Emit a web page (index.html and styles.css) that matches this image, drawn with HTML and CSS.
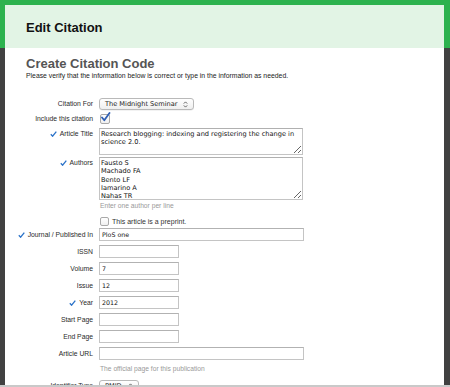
FILE: index.html
```html
<!DOCTYPE html>
<html>
<head>
<meta charset="utf-8">
<link rel="stylesheet" href="styles.css">
</head>
<body>
<div class="viewport">
  <div class="panel">
    <div class="panel-head"><h1>Edit Citation</h1></div>
    <div class="panel-body">
      <h2>Create Citation Code</h2>
      <p class="intro">Please verify that the information below is correct or type in the information as needed.</p>

      <div class="row r-select">
        <label class="lbl">Citation For</label>
        <div class="select w-cite"><span>The Midnight Seminar</span><svg class="arr" width="5" height="7" viewBox="0 0 5 7"><path d="M0.8 2.6 L2.5 0.9 L4.2 2.6 M0.8 4.4 L2.5 6.1 L4.2 4.4" fill="none" stroke="#555" stroke-width="0.9"/></svg></div>
      </div>

      <div class="row r-check">
        <label class="lbl">Include this citation</label>
        <div class="cb checked"><svg width="11" height="11" viewBox="0 0 11 11"><path d="M2 5.5 L4.3 8.3 L9.5 1" fill="none" stroke="#2f5fb3" stroke-width="1.8" stroke-linecap="round" stroke-linejoin="round"/></svg></div>
      </div>

      <div class="row r-title">
        <label class="lbl"><svg class="ok" width="7" height="6" viewBox="0 0 7 6"><path d="M0.8 3.3 L2.6 5.2 L6.3 0.6" fill="none" stroke="#2a72c8" stroke-width="1.3"/></svg>Article Title</label>
        <textarea class="ta ta-title">Research blogging: indexing and registering the change in science 2.0.</textarea>
      </div>

      <div class="row r-authors">
        <label class="lbl"><svg class="ok" width="7" height="6" viewBox="0 0 7 6"><path d="M0.8 3.3 L2.6 5.2 L6.3 0.6" fill="none" stroke="#2a72c8" stroke-width="1.3"/></svg>Authors</label>
        <textarea class="ta ta-authors">Fausto S
Machado FA
Bento LF
Iamarino A
Nahas TR</textarea>
      </div>

      <div class="row r-hint">
        <span></span>
        <p class="hint">Enter one author per line</p>
      </div>

      <div class="row r-pre">
        <span></span>
        <div class="pre"><span class="cb"></span><span class="pre-text">This article is a preprint.</span></div>
      </div>

      <div class="row r-input r-first">
        <label class="lbl"><svg class="ok" width="7" height="6" viewBox="0 0 7 6"><path d="M0.8 3.3 L2.6 5.2 L6.3 0.6" fill="none" stroke="#2a72c8" stroke-width="1.3"/></svg>Journal / Published In</label>
        <input class="in wide" type="text" value="PloS one">
      </div>
      <div class="row r-input">
        <label class="lbl">ISSN</label>
        <input class="in short" type="text" value="">
      </div>
      <div class="row r-input">
        <label class="lbl">Volume</label>
        <input class="in short" type="text" value="7">
      </div>
      <div class="row r-input">
        <label class="lbl">Issue</label>
        <input class="in short" type="text" value="12">
      </div>
      <div class="row r-input">
        <label class="lbl"><svg class="ok" width="7" height="6" viewBox="0 0 7 6"><path d="M0.8 3.3 L2.6 5.2 L6.3 0.6" fill="none" stroke="#2a72c8" stroke-width="1.3"/></svg>Year</label>
        <input class="in short" type="text" value="2012">
      </div>
      <div class="row r-input">
        <label class="lbl">Start Page</label>
        <input class="in short" type="text" value="">
      </div>
      <div class="row r-input">
        <label class="lbl">End Page</label>
        <input class="in short" type="text" value="">
      </div>
      <div class="row r-input r-url">
        <label class="lbl">Article URL</label>
        <input class="in wide" type="text" value="">
      </div>
      <div class="row r-hint2">
        <span></span>
        <p class="hint">The official page for this publication</p>
      </div>
      <div class="row r-select r-last">
        <label class="lbl">Identifier Type</label>
        <div class="select w-id"><span>PMID</span><svg class="arr" width="5" height="7" viewBox="0 0 5 7"><path d="M0.8 2.6 L2.5 0.9 L4.2 2.6 M0.8 4.4 L2.5 6.1 L4.2 4.4" fill="none" stroke="#555" stroke-width="0.9"/></svg></div>
      </div>
    </div>
  </div>
</div>
<div class="bottom-line"></div>
</body>
</html>
```

FILE: styles.css
```css
html, body {
  margin: 0;
  padding: 0;
}
body {
  width: 450px;
  height: 387px;
  overflow: hidden;
  display: flex;
  flex-direction: column;
  background: linear-gradient(#2db24e 0, #2db24e 48px, #414141 48px);
  font-family: "Liberation Sans", Arial, sans-serif;
  color: #333;
}
.viewport {
  flex: 1;
  overflow: hidden;
  padding: 5px 6px 0 5px;
}
.bottom-line {
  height: 2px;
  background: #c9c9c9;
}
.panel {
  background: #fff;
  height: 100%;
}
.panel-head {
  background: #e2f4e5;
  height: 43px;
  display: flex;
  align-items: center;
  padding-left: 21px;
}
.panel-head h1 {
  margin: 1px 0 0 0;
  font-size: 13px;
  font-weight: bold;
  color: #111;
  line-height: 15px;
}
.panel-body {
  padding-top: 8px;
}
.panel-body h2 {
  margin: 0 0 0 21px;
  font-size: 13px;
  line-height: 15px;
  color: #555;
  font-weight: bold;
}
.intro {
  margin: 1px 0 0 21px;
  font-size: 6.85px;
  line-height: 8px;
  color: #222;
}
.row {
  display: grid;
  grid-template-columns: 88px auto;
  column-gap: 6px;
  align-items: start;
  justify-items: start;
}
.lbl {
  justify-self: end;
  font-size: 6.8px;
  line-height: 12px;
  color: #2a2a2a;
  white-space: nowrap;
  display: flex;
  align-items: center;
}
.ok {
  margin-right: 3px;
}
.panel-body .row:first-of-type { margin-top: 18px; }
.select {
  height: 10px;
  border: 1px solid #b9b9b9;
  border-radius: 3px;
  background: linear-gradient(#ffffff, #efefef);
  display: flex;
  align-items: center;
  justify-content: space-between;
  padding: 0 5px 0 5px;
  font-family: "DejaVu Sans", sans-serif;
  font-size: 6.6px;
  color: #222;
  box-shadow: 0 0.5px 0.5px rgba(0,0,0,0.1);
}
.w-cite { width: 83px; }
.w-id { width: 28px; }
.r-check { margin-top: 3px; height: 11px; }
.r-check .lbl { line-height: 11px; }
.cb {
  width: 8px;
  height: 8px;
  border: 1px solid #a9a9a9;
  border-radius: 2px;
  background: linear-gradient(#fff, #f0f0f0);
  margin-left: 1px;
  position: relative;
}
.cb.checked {
  margin-top: 1px;
}
.cb.checked svg {
  position: absolute;
  left: -1px;
  top: -3px;
}
.r-title { margin-top: 4px; }
.ta {
  box-sizing: border-box;
  width: 204px;
  border: 1px solid #c4c4c4;
  border-top-color: #b0b0b0;
  margin: 0;
  padding: 1px 1px;
  font-family: "DejaVu Sans", sans-serif;
  font-size: 6.6px;
  line-height: 8.3px;
  color: #111;
  resize: both;
  overflow: hidden;
  background: #fff;
  outline: none;
}
.ta-title { height: 27px; }
.r-authors { margin-top: 2px; }
.ta-authors { height: 43px; padding-top: 1px; }
.hint {
  margin: 0 0 0 1px;
  font-size: 6.7px;
  line-height: 11px;
  color: #999;
  white-space: nowrap;
}
.r-hint { height: 11px; }
.r-pre { margin-top: 4px; height: 12px; }
.pre {
  display: flex;
  align-items: center;
  height: 12px;
}
.pre .cb { margin-left: 1px; width: 7px; height: 7px; }
.pre-text {
  margin-left: 3px;
  font-size: 7px;
  color: #333;
}
.r-input { margin-top: 4px; }
.r-input.r-first { margin-top: 1px; }
.r-input .lbl { line-height: 13px; }
.in {
  box-sizing: border-box;
  height: 13px;
  border: 1px solid #c4c4c4;
  border-top-color: #b2b2b2;
  margin: 0;
  padding: 0 2px;
  font-family: "DejaVu Sans", sans-serif;
  font-size: 6.3px;
  color: #111;
  background: #fff;
  outline: none;
}
.wide { width: 205px; }
.short { width: 80px; }
.r-hint2 { height: 16px; }
.r-hint2 .hint { line-height: 16px; margin-top: 1px; }
.r-last { margin-top: 4px; }
```
